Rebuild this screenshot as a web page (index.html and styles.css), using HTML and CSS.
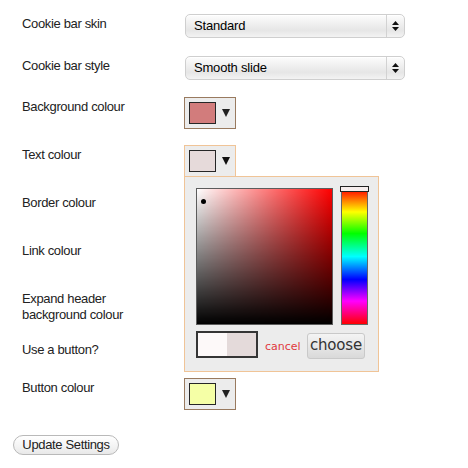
FILE: index.html
```html
<!DOCTYPE html>
<html>
<head>
<meta charset="utf-8">
<link rel="stylesheet" href="styles.css">
</head>
<body>
<div class="settings">
  <div class="row">
    <div class="label">Cookie bar skin</div>
    <div class="field field-select">
      <div class="select"><span class="select-text">Standard</span><span class="select-arrows"><svg width="7" height="10" viewBox="0 0 7 10"><path d="M3.5 0 L7 4 L0 4 Z M0 6 L7 6 L3.5 10 Z" fill="#111"/></svg></span></div>
    </div>
  </div>
  <div class="row">
    <div class="label">Cookie bar style</div>
    <div class="field field-select">
      <div class="select"><span class="select-text">Smooth slide</span><span class="select-arrows"><svg width="7" height="10" viewBox="0 0 7 10"><path d="M3.5 0 L7 4 L0 4 Z M0 6 L7 6 L3.5 10 Z" fill="#111"/></svg></span></div>
    </div>
  </div>
  <div class="row">
    <div class="label">Background colour</div>
    <div class="field">
      <div class="swatch-box"><span class="swatch swatch-bg"></span><svg class="caret" width="8" height="8" viewBox="0 0 8 8"><path d="M0 0 L8 0 L4 8 Z" fill="#222"/></svg></div>
    </div>
  </div>
  <div class="row">
    <div class="label">Text colour</div>
    <div class="field field-open">
      <div class="swatch-box swatch-box-active"><span class="swatch swatch-text"></span><svg class="caret" width="8" height="8" viewBox="0 0 8 8"><path d="M0 0 L8 0 L4 8 Z" fill="#111"/></svg></div>
      <div class="picker">
        <div class="picker-top">
          <div class="sv-square"><span class="sv-dot"></span></div>
          <div class="hue-bar"><span class="hue-marker"></span></div>
        </div>
        <div class="picker-bottom">
          <div class="preview"><span class="preview-new"></span><span class="preview-old"></span></div>
          <span class="cancel">cancel</span>
          <span class="choose">choose</span>
        </div>
      </div>
    </div>
  </div>
  <div class="row">
    <div class="label">Border colour</div>
    <div class="field">
      <div class="swatch-box"><span class="swatch swatch-text"></span><svg class="caret" width="8" height="8" viewBox="0 0 8 8"><path d="M0 0 L8 0 L4 8 Z" fill="#222"/></svg></div>
    </div>
  </div>
  <div class="row">
    <div class="label">Link colour</div>
    <div class="field">
      <div class="swatch-box"><span class="swatch swatch-text"></span><svg class="caret" width="8" height="8" viewBox="0 0 8 8"><path d="M0 0 L8 0 L4 8 Z" fill="#222"/></svg></div>
    </div>
  </div>
  <div class="row">
    <div class="label">Expand header background colour</div>
    <div class="field">
      <div class="swatch-box"><span class="swatch swatch-text"></span><svg class="caret" width="8" height="8" viewBox="0 0 8 8"><path d="M0 0 L8 0 L4 8 Z" fill="#222"/></svg></div>
    </div>
  </div>
  <div class="row">
    <div class="label">Use a button?</div>
    <div class="field field-check">
      <span class="checkbox"></span>
    </div>
  </div>
  <div class="row">
    <div class="label">Button colour</div>
    <div class="field">
      <div class="swatch-box"><span class="swatch swatch-button"></span><svg class="caret" width="8" height="8" viewBox="0 0 8 8"><path d="M0 0 L8 0 L4 8 Z" fill="#222"/></svg></div>
    </div>
  </div>
  <div class="submit">
    <span class="button">Update Settings</span>
  </div>
</div>
</body>
</html>
```
FILE: styles.css
```css
html, body {
  margin: 0;
  padding: 0;
  background: #fff;
}

body {
  font-family: "Liberation Sans", Arial, sans-serif;
  font-size: 13px;
  color: #222;
}

.settings {
  padding-top: 6px;
}

.row {
  display: flex;
  align-items: flex-start;
}

.label {
  box-sizing: border-box;
  width: 184px;
  padding: 10px 30px 9px 22px;
  line-height: 16px;
  letter-spacing: -0.35px;
}

.field {
  padding: 8px 0;
}

.field-select {
  padding: 8px 0 9px;
}

.field-select:first-child,
.row:first-child .field-select {
  padding-bottom: 10px;
}

.row:nth-child(2) .field-select {
  padding-bottom: 9px;
}

.field-open {
  position: relative;
}

.field-check {
  height: 22px;
}

.select {
  box-sizing: border-box;
  width: 220px;
  height: 24px;
  margin-left: 1px;
  display: flex;
  align-items: stretch;
  border: 1px solid #cfcfcf;
  border-radius: 5px;
  background: linear-gradient(to bottom, #fdfdfd 0%, #f1f1f1 35%, #e6e6e6 70%, #f3f3f3 100%);
  box-shadow: inset 0 1px 0 #fff;
}

.select-text {
  flex: 1;
  padding-left: 8px;
  line-height: 22px;
  color: #000;
  letter-spacing: -0.2px;
}

.select-arrows {
  width: 17px;
  border-left: 1px solid #d2d2d2;
  display: flex;
  align-items: center;
  justify-content: center;
}

.swatch-box {
  box-sizing: border-box;
  width: 52px;
  height: 32px;
  border: 1px solid #997a5f;
  background: #ececec;
  display: flex;
  align-items: center;
  padding-left: 4px;
}

.swatch-box-active {
  border-color: #f0c497;
}

.swatch {
  box-sizing: border-box;
  width: 27px;
  height: 22px;
  border: 1px solid #262626;
}

.swatch-bg {
  background: #d27c7c;
}

.swatch-text {
  background: #e6dada;
}

.swatch-button {
  background: #f5ffa6;
}

.caret {
  margin-left: 6px;
  margin-top: -1px;
}

.checkbox {
  display: block;
  width: 14px;
  height: 14px;
}

.picker {
  position: absolute;
  z-index: 5;
  left: 0;
  top: 39px;
  box-sizing: border-box;
  width: 195px;
  height: 196px;
  border: 1px solid #f0c497;
  background: #ececec;
  padding: 11px 10px 0 11px;
}

.picker-top {
  display: flex;
  gap: 7px;
}

.sv-square {
  position: relative;
  box-sizing: border-box;
  width: 138px;
  height: 137px;
  border: 1px solid #5c5c5c;
  background:
    linear-gradient(to bottom, rgba(0,0,0,0) 0%, #000 100%),
    linear-gradient(to right, #fff 0%, #f00 100%);
}

.sv-dot {
  position: absolute;
  left: 4px;
  top: 10px;
  width: 5px;
  height: 5px;
  border-radius: 50%;
  background: #000;
}

.hue-bar {
  position: relative;
  box-sizing: border-box;
  width: 27px;
  height: 137px;
  margin-left: 1px;
  border: 1px solid #666;
  background: linear-gradient(to bottom, #f00 0%, #ff0 17%, #0f0 33%, #0ff 50%, #00f 67%, #f0f 83%, #f00 100%);
}

.hue-marker {
  position: absolute;
  left: -2px;
  right: -2px;
  top: -3px;
  height: 6px;
  box-sizing: border-box;
  border: 1px solid #222;
  background: #f6eeee;
}

.picker-bottom {
  display: flex;
  align-items: flex-start;
  margin-top: 6px;
}

.preview {
  box-sizing: border-box;
  width: 62px;
  height: 27px;
  border: 2px solid #353535;
  display: flex;
}

.preview-new {
  width: 29px;
  background: #fdf9f9;
}

.preview-old {
  flex: 1;
  background: #e4dada;
}

.cancel {
  margin-left: 7px;
  margin-top: 9px;
  font-family: "DejaVu Sans", sans-serif;
  font-size: 11px;
  line-height: 14px;
  color: #e0393e;
}

.choose {
  box-sizing: border-box;
  margin-left: auto;
  margin-right: 3px;
  margin-top: 2px;
  width: 58px;
  height: 26px;
  border: 1px solid #c9c9c9;
  border-radius: 3px;
  background: linear-gradient(to bottom, #f4f4f4 0%, #e4e4e4 60%, #d9d9d9 100%);
  font-family: "DejaVu Sans", sans-serif;
  font-size: 15px;
  line-height: 23px;
  text-align: center;
  color: #333;
  letter-spacing: -0.2px;
}

.submit {
  padding: 17px 0 0 13px;
}

.button {
  display: inline-block;
  box-sizing: border-box;
  width: 106px;
  height: 20px;
  border: 1px solid #b9b9b9;
  border-radius: 10px;
  background: linear-gradient(to bottom, #fff 0%, #f3f3f3 60%, #e8e8e8 100%);
  text-align: center;
  line-height: 18px;
  color: #222;
  letter-spacing: -0.35px;
}
```
